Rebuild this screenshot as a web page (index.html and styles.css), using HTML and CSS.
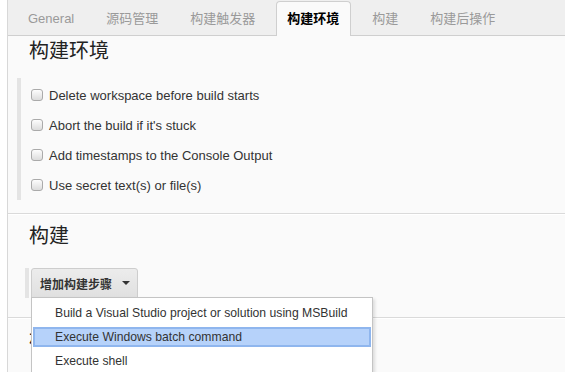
FILE: index.html
```html
<!DOCTYPE html>
<html lang="zh-CN">
<head>
    <meta charset="UTF-8">
    <title>配置</title>
    <link rel="stylesheet" href="styles.css">
</head>
<body>

    <div class="page">
        <div class="tabbar">
            <div class="tab">General</div>
            <div class="tab">源码管理</div>
            <div class="tab">构建触发器</div>
            <div class="tab active">构建环境</div>
            <div class="tab">构建</div>
            <div class="tab">构建后操作</div>
        </div>

        <!-- 构建环境 -->
        <div class="section env">
            <h2>构建环境</h2>
            <div class="chunk options">
                <label class="option"><input type="checkbox"> Delete workspace before build starts</label>
                <label class="option"><input type="checkbox"> Abort the build if it's stuck</label>
                <label class="option"><input type="checkbox"> Add timestamps to the Console Output</label>
                <label class="option"><input type="checkbox"> Use secret text(s) or file(s)</label>
            </div>
        </div>

        <!-- 构建 -->
        <div class="section build">
            <h2>构建</h2>
            <div class="chunk steps">
                <button class="add-step" type="button">增加构建步骤 <span class="caret"></span></button>
            </div>
        </div>

        <!-- 构建后操作 -->
        <div class="section post">
            <h2>构建后操作</h2>
        </div>
    </div>

    <div class="menu">
        <div class="menu-item">Build a Visual Studio project or solution using MSBuild</div>
        <div class="menu-item selected">Execute Windows batch command</div>
        <div class="menu-item">Execute shell</div>
    </div>

</body>
</html>
```

FILE: styles.css
```css
body {
    margin: 0;
    background: #fff;
    font-family: "Liberation Sans", Arial, "Noto Sans CJK SC", sans-serif;
    font-size: 13px;
    color: #333;
    position: relative;
    height: 372px;
    overflow: hidden;
}

.page {
    margin-left: 7px;
    border-left: 1px solid #d8d8d8;
    background: #fafafa;
    height: 372px;
    overflow: hidden;
}

/* tabs */
.tabbar {
    display: flex;
    align-items: flex-end;
    height: 35px;
    padding-left: 4px;
    background: #efefef;
    border-bottom: 1px solid #cfcfcf;
}

.tab {
    padding: 0 16px;
    height: 33px;
    line-height: 33px;
    color: #9a9a9a;
}

.tab.active {
    margin: 0 5px -1px;
    padding: 0 11px 0 10px;
    height: 34px;
    line-height: 33px;
    background: #fafafa;
    border: 1px solid #cfcfcf;
    border-bottom: none;
    border-radius: 4px 4px 0 0;
    color: #000;
    font-weight: bold;
}

/* sections */
.section {
    padding-left: 21px;
    border-bottom: 1px solid #dadada;
    box-shadow: 0 1px 0 #fff;
}

.section h2 {
    margin: 0;
    font-family: "Noto Sans CJK SC", sans-serif;
    font-size: 20px;
    font-weight: normal;
    line-height: 24px;
    color: #222;
}

.env {
    padding-top: 2px;
    padding-bottom: 13px;
}

.build {
    padding-top: 9px;
    padding-bottom: 19px;
}

.post {
    padding-top: 9px;
    border-bottom: none;
    box-shadow: none;
}

.chunk {
    border-left: 4px solid #e4e4e4;
}

.options {
    margin: 16px 0 0 -12px;
    padding: 2px 0 0 10px;
}

.option {
    display: flex;
    align-items: center;
    gap: 6px;
    height: 30px;
}

.option input {
    appearance: none;
    -webkit-appearance: none;
    margin: 0;
    width: 12px;
    height: 12px;
    border: 1px solid #aaa;
    border-radius: 3px;
    background: linear-gradient(#fdfdfd, #dcdcdc);
}

.steps {
    margin: 21px 0 0 -4px;
    padding-left: 2px;
}

.add-step {
    display: flex;
    align-items: center;
    height: 30px;
    padding: 0 7px 0 8px;
    border: 1px solid #cdcdcd;
    border-radius: 3px 3px 0 0;
    background: linear-gradient(#ececec, #e0e0e0);
    font-family: "Noto Sans CJK SC", sans-serif;
    font-size: 12px;
    font-weight: bold;
    color: #333;
}

.caret {
    margin-left: 10px;
    width: 0;
    height: 0;
    border-left: 4px solid transparent;
    border-right: 4px solid transparent;
    border-top: 4px solid #333;
}

/* dropdown over the page */
.menu {
    position: absolute;
    left: 31px;
    top: 297px;
    width: 340px;
    height: 69px;
    padding-top: 5px;
    display: flex;
    flex-direction: column;
    gap: 4px;
    background: #fff;
    border: 1px solid #c4c4c4;
    box-shadow: 2px 2px 3px rgba(0, 0, 0, 0.12);
    font-size: 12.2px;
}

.menu-item {
    margin: 0 1px;
    height: 20px;
    line-height: 20px;
    padding-left: 22px;
    color: #333;
    white-space: nowrap;
}

.menu-item.selected {
    height: 16px;
    line-height: 16px;
    padding-left: 20px;
    background: #b6d2fa;
    border: 2px solid #8fb6ee;
}
```
